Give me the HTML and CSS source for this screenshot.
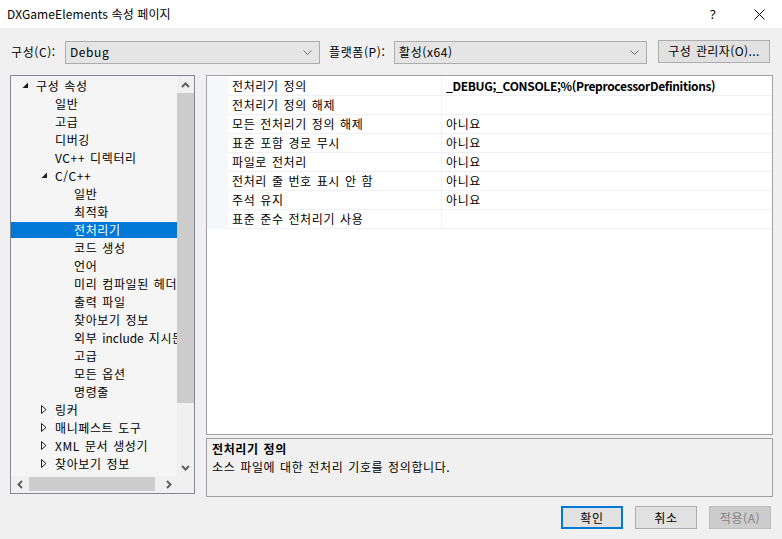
FILE: index.html
```html
<!DOCTYPE html>
<html lang="ko">
<head>
<meta charset="utf-8">
<title>DXGameElements 속성 페이지</title>
<link rel="stylesheet" href="styles.css">
</head>
<body>
<div class="window">
  <header class="titlebar">
    <span class="title">DXGameElements 속성 페이지</span>
    <div class="caption">
      <span class="cap-btn help">?</span>
      <span class="cap-btn close"><svg width="11" height="11" viewBox="0 0 11 11"><path d="M0.5 0.5L10.5 10.5M10.5 0.5L0.5 10.5" stroke="#000" stroke-width="1" fill="none"/></svg></span>
    </div>
  </header>

  <div class="toolbar">
    <span class="lbl lbl-config">구성(C):</span>
    <div class="combo combo-config"><span>Debug</span><svg class="chev" width="9" height="5" viewBox="0 0 9 5"><path d="M0.5 0.5L4.5 4.5L8.5 0.5" stroke="#707070" fill="none"/></svg></div>
    <span class="lbl lbl-platform">플랫폼(P):</span>
    <div class="combo combo-platform"><span>활성(x64)</span><svg class="chev" width="9" height="5" viewBox="0 0 9 5"><path d="M0.5 0.5L4.5 4.5L8.5 0.5" stroke="#707070" fill="none"/></svg></div>
    <button class="btn btn-manager">구성 관리자(O)...</button>
  </div>

  <div class="main">
    <div class="tree">
      <div class="tree-body">
        <div class="tree-list">
          <div class="row l1"><span class="twisty"><svg width="7" height="7" viewBox="0 0 7 7"><path d="M6 0.5L6 6L0.5 6Z" fill="#1e1e1e"/></svg></span><span>구성 속성</span></div>
          <div class="row l2"><span class="twisty"></span><span>일반</span></div>
          <div class="row l2"><span class="twisty"></span><span>고급</span></div>
          <div class="row l2"><span class="twisty"></span><span>디버깅</span></div>
          <div class="row l2"><span class="twisty"></span><span>VC++ 디렉터리</span></div>
          <div class="row l2"><span class="twisty"><svg width="7" height="7" viewBox="0 0 7 7"><path d="M6 0.5L6 6L0.5 6Z" fill="#1e1e1e"/></svg></span><span>C/C++</span></div>
          <div class="row l3"><span class="twisty"></span><span>일반</span></div>
          <div class="row l3"><span class="twisty"></span><span>최적화</span></div>
          <div class="row l3 selected"><span class="twisty"></span><span>전처리기</span></div>
          <div class="row l3"><span class="twisty"></span><span>코드 생성</span></div>
          <div class="row l3"><span class="twisty"></span><span>언어</span></div>
          <div class="row l3"><span class="twisty"></span><span>미리 컴파일된 헤더</span></div>
          <div class="row l3"><span class="twisty"></span><span>출력 파일</span></div>
          <div class="row l3"><span class="twisty"></span><span>찾아보기 정보</span></div>
          <div class="row l3"><span class="twisty"></span><span>외부 <span class="latin">include</span> 지시문</span></div>
          <div class="row l3"><span class="twisty"></span><span>고급</span></div>
          <div class="row l3"><span class="twisty"></span><span>모든 옵션</span></div>
          <div class="row l3"><span class="twisty"></span><span>명령줄</span></div>
          <div class="row l2"><span class="twisty"><svg width="6" height="9" viewBox="0 0 6 9"><path d="M0.5 0.5L5 4.5L0.5 8.5Z" fill="none" stroke="#1e1e1e"/></svg></span><span>링커</span></div>
          <div class="row l2"><span class="twisty"><svg width="6" height="9" viewBox="0 0 6 9"><path d="M0.5 0.5L5 4.5L0.5 8.5Z" fill="none" stroke="#1e1e1e"/></svg></span><span>매니페스트 도구</span></div>
          <div class="row l2"><span class="twisty"><svg width="6" height="9" viewBox="0 0 6 9"><path d="M0.5 0.5L5 4.5L0.5 8.5Z" fill="none" stroke="#1e1e1e"/></svg></span><span>XML 문서 생성기</span></div>
          <div class="row l2"><span class="twisty"><svg width="6" height="9" viewBox="0 0 6 9"><path d="M0.5 0.5L5 4.5L0.5 8.5Z" fill="none" stroke="#1e1e1e"/></svg></span><span>찾아보기 정보</span></div>
        </div>
        <div class="vscroll">
          <div class="sb-arrow"><svg width="9" height="6" viewBox="0 0 9 6"><path d="M1 5L4.5 1.5L8 5" stroke="#606060" stroke-width="2" fill="none"/></svg></div>
          <div class="vtrack"><div class="vthumb"></div></div>
          <div class="sb-arrow"><svg width="9" height="6" viewBox="0 0 9 6"><path d="M1 1L4.5 4.5L8 1" stroke="#606060" stroke-width="2" fill="none"/></svg></div>
        </div>
      </div>
      <div class="tree-foot">
        <div class="hscroll">
          <div class="sb-arrow"><svg width="6" height="9" viewBox="0 0 6 9"><path d="M5 1L1.5 4.5L5 8" stroke="#606060" stroke-width="2" fill="none"/></svg></div>
          <div class="htrack"><div class="hthumb"></div></div>
          <div class="sb-arrow"><svg width="6" height="9" viewBox="0 0 6 9"><path d="M1 1L4.5 4.5L1 8" stroke="#606060" stroke-width="2" fill="none"/></svg></div>
        </div>
        <div class="corner"></div>
      </div>
    </div>

    <div class="right">
      <div class="grid">
        <div class="grow"><span class="gm"></span><span class="gn">전처리기 정의</span><span class="gv bold">_DEBUG;_CONSOLE;%(PreprocessorDefinitions)</span></div>
        <div class="grow"><span class="gm"></span><span class="gn">전처리기 정의 해제</span><span class="gv"></span></div>
        <div class="grow"><span class="gm"></span><span class="gn">모든 전처리기 정의 해제</span><span class="gv">아니요</span></div>
        <div class="grow"><span class="gm"></span><span class="gn">표준 포함 경로 무시</span><span class="gv">아니요</span></div>
        <div class="grow"><span class="gm"></span><span class="gn">파일로 전처리</span><span class="gv">아니요</span></div>
        <div class="grow"><span class="gm"></span><span class="gn">전처리 줄 번호 표시 안 함</span><span class="gv">아니요</span></div>
        <div class="grow"><span class="gm"></span><span class="gn">주석 유지</span><span class="gv">아니요</span></div>
        <div class="grow"><span class="gm"></span><span class="gn">표준 준수 전처리기 사용</span><span class="gv"></span></div>
      </div>
      <div class="desc">
        <div class="desc-title">전처리기 정의</div>
        <div class="desc-text">소스 파일에 대한 전처리 기호를 정의합니다.</div>
      </div>
    </div>
  </div>

  <div class="footer">
    <button class="btn btn-ok">확인</button>
    <button class="btn">취소</button>
    <button class="btn btn-disabled">적용(A)</button>
  </div>
</div>
</body>
</html>
```
FILE: styles.css
```css
* { box-sizing: border-box; }
html, body { margin: 0; padding: 0; }
body {
  width: 782px;
  height: 539px;
  background: #f0f0f0;
  font-family: "Noto Sans CJK KR", "Noto Sans", sans-serif;
  font-size: 12px;
  letter-spacing: 0.6px;
  word-spacing: 1px;
  color: #000;
  overflow: hidden;
}
.window { width: 782px; height: 539px; display: flex; flex-direction: column; }

.titlebar {
  height: 28px;
  background: #fff;
  display: flex;
  align-items: center;
  justify-content: space-between;
  padding-left: 7px;
}
.title { font-size: 12px; line-height: 16px; letter-spacing: 0.1px; word-spacing: 0; }
.caption { display: flex; height: 28px; }
.cap-btn { display: flex; align-items: center; justify-content: center; height: 28px; }
.help { width: 46px; font-size: 13px; font-family: "Noto Sans", sans-serif; }
.close { width: 46px; }

.toolbar {
  display: flex;
  align-items: center;
  height: 23px;
  margin-top: 12px;
  padding-left: 11px;
}
.lbl { line-height: 16px; }
.lbl-config { width: 54px; }
.lbl-platform { width: 65px; margin-left: 9px; }
.combo {
  height: 23px;
  margin-top: 1px;
  background: #e5e5e5;
  border: 1px solid #acacac;
  display: flex;
  align-items: center;
  justify-content: space-between;
  padding: 0 7px 0 4px;
  line-height: 16px;
}
.combo-config { width: 255px; }
.combo-platform { width: 253px; }
.chev { margin-top: 1px; }

.btn {
  font-family: inherit;
  font-size: 12px;
  letter-spacing: inherit;
  word-spacing: inherit;
  line-height: 16px;
  color: #000;
  background: #e1e1e1;
  border: 1px solid #adadad;
  height: 23px;
  padding: 0;
  width: 62px;
}
.btn-manager { width: 112px; margin-left: 11px; margin-top: -1px; letter-spacing: 0.4px; }

.main {
  display: flex;
  margin-top: 12px;
  padding-left: 10px;
  gap: 11px;
}
.tree {
  width: 185px;
  height: 419px;
  border: 1px solid #828790;
  display: flex;
  flex-direction: column;
}
.tree-body { display: flex; height: 400px; }
.tree-list {
  width: 166px;
  background: #f5f5f5;
  overflow: hidden;
}
.row {
  height: 18px;
  display: flex;
  align-items: center;
  white-space: nowrap;
  line-height: 16px;
  padding-top: 1px;
}
.row.l1 { padding-left: 9px; }
.row.l2 { padding-left: 28px; }
.row.l3 { padding-left: 47px; }
.latin { letter-spacing: 0; }
.twisty { width: 16px; flex: none; display: flex; align-items: center; padding-left: 2px; }
.row.selected {
  background: linear-gradient(to bottom, transparent 2px, #0078d7 2px);
  color: #fff;
}

.vscroll { width: 17px; display: flex; flex-direction: column; background: #f0f0f0; }
.sb-arrow { width: 17px; height: 17px; display: flex; align-items: center; justify-content: center; flex: none; }
.vtrack { flex: 1; }
.vthumb { width: 17px; height: 310px; background: #cdcdcd; }

.tree-foot { display: flex; height: 17px; }
.hscroll { width: 166px; display: flex; background: #f0f0f0; }
.htrack { flex: 1; padding: 1px 0 2px 1px; }
.hthumb { width: 126px; height: 14px; background: #cdcdcd; }
.corner { width: 17px; background: #f0f0f0; }

.right { width: 567px; display: flex; flex-direction: column; gap: 3px; }
.grid {
  height: 360px;
  background: #fff;
  border: 1px solid #a0a0a0;
  padding-top: 1px;
}
.grow {
  display: flex;
  height: 19px;
}
.gm { width: 21px; background: #f5f7fa; flex: none; }
.gn {
  width: 214px;
  flex: none;
  padding-left: 4px;
  line-height: 18px;
  border-bottom: 1px solid #eef0f5;
  border-right: 1px solid #eef0f5;
  white-space: nowrap;
  background: #fff;
}
.gv {
  flex: 1;
  padding-left: 4px;
  line-height: 18px;
  border-bottom: 1px solid #eef0f5;
  white-space: nowrap;
}
.gv.bold { font-weight: 700; letter-spacing: -0.33px; }

.desc {
  height: 59px;
  border: 1px solid #a0a0a0;
  background: #f0f0f0;
  padding: 1px 0 0 5px;
}
.desc-title { font-weight: 700; line-height: 17px; }
.desc-text { line-height: 19px; }

.footer {
  display: flex;
  justify-content: flex-end;
  gap: 12px;
  padding-right: 11px;
  margin-top: 9px;
}
.btn-ok { border: 2px solid #0078d7; }
.btn-disabled { background: #cccccc; border-color: #bfbfbf; color: #838383; }
```
